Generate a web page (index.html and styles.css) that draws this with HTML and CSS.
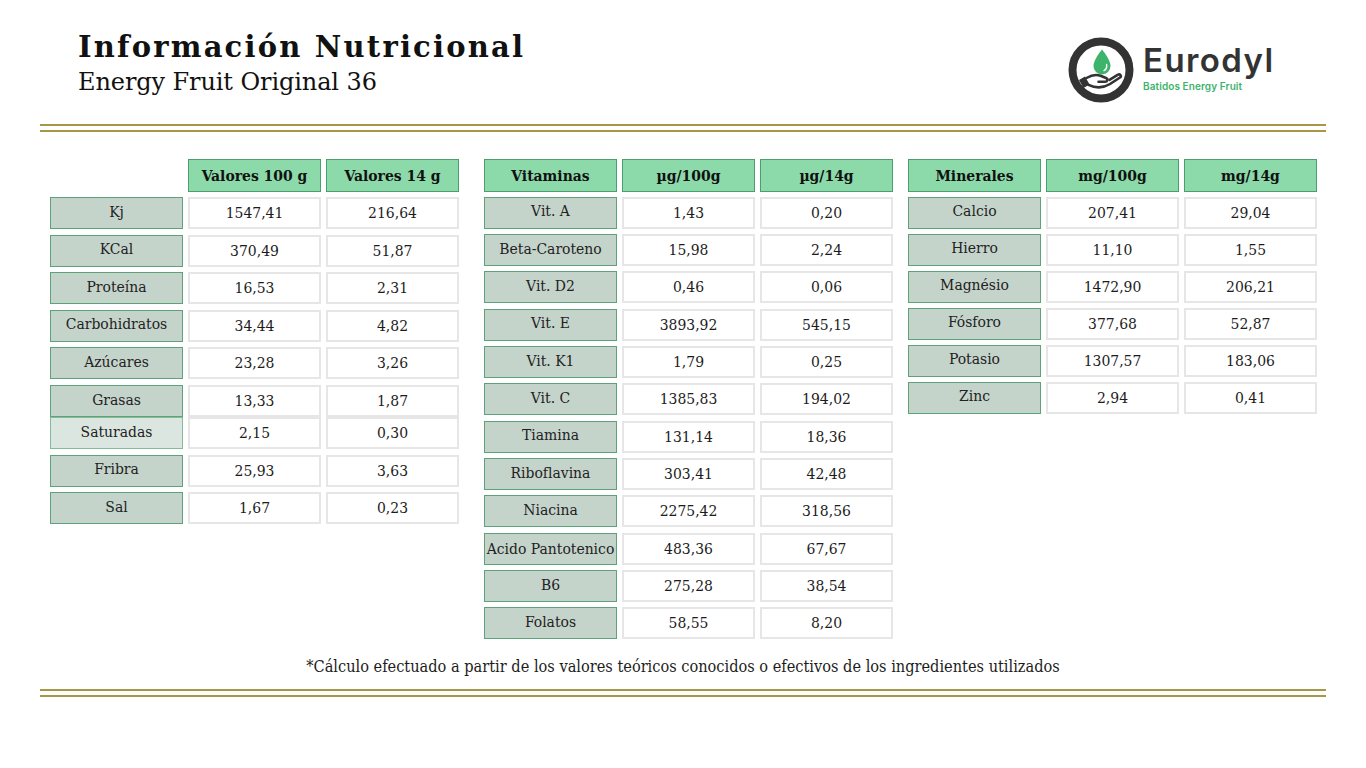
FILE: index.html
```html
<!DOCTYPE html>
<html lang="es">
<head>
<meta charset="utf-8">
<title>Información Nutricional</title>
<link rel="stylesheet" href="styles.css">
</head>
<body>
<div class="page">
  <header class="top">
    <div class="titles">
      <h1 class="title">Información Nutricional</h1>
      <div class="subtitle">Energy Fruit Original 36</div>
    </div>
    <div class="logo">
      <svg class="logo-icon" viewBox="0 0 66 66" width="66" height="66">
        <circle cx="33" cy="33" r="28.5" fill="none" stroke="#333333" stroke-width="8"/>
        <path d="M34 12.5 C34 12.5 25.5 22.5 25.5 29 A8.5 8.5 0 0 0 42.5 29 C42.5 22.5 34 12.5 34 12.5 Z" fill="#3db36c"/>
        <path d="M38.6 27.5 C39 30 38.2 32.4 36 33.6" fill="none" stroke="#ffffff" stroke-width="1.4" stroke-linecap="round"/>
        <path d="M11 43 L17 39.5 L21.5 47.5 L15.5 51 Z" fill="#333333"/>
        <path d="M18.5 41 C23.5 38 28 37 32.5 38.8 L38 41 C40.3 42 39.6 44.8 37 44.8 L30.5 44.8" fill="none" stroke="#333333" stroke-width="2.6" stroke-linecap="round" stroke-linejoin="round"/>
        <path d="M20.5 47.8 C28 51.5 35.5 51 42 47 L52 40.5 C53.8 39 52.2 36.6 50 37.7 L41.5 42.8" fill="none" stroke="#333333" stroke-width="2.6" stroke-linecap="round" stroke-linejoin="round"/>
      </svg>
      <div class="logo-text">
        <div class="brand">Eurodyl</div>
        <div class="tagline">Batidos Energy Fruit</div>
      </div>
    </div>
  </header>

  <div class="rule"></div>

  <main class="tables">
    <section class="tbl tbl-basic">
      <div class="row head-row">
        <div class="cell blank"></div>
        <div class="cell head">Valores 100 g</div>
        <div class="cell head">Valores 14 g</div>
      </div>
      <div class="row"><div class="cell lab">Kj</div><div class="cell val">1547,41</div><div class="cell val">216,64</div></div>
      <div class="row"><div class="cell lab">KCal</div><div class="cell val">370,49</div><div class="cell val">51,87</div></div>
      <div class="row"><div class="cell lab">Proteína</div><div class="cell val">16,53</div><div class="cell val">2,31</div></div>
      <div class="row"><div class="cell lab">Carbohidratos</div><div class="cell val">34,44</div><div class="cell val">4,82</div></div>
      <div class="row"><div class="cell lab">Azúcares</div><div class="cell val">23,28</div><div class="cell val">3,26</div></div>
      <div class="row"><div class="cell lab">Grasas</div><div class="cell val">13,33</div><div class="cell val">1,87</div></div>
      <div class="row joined"><div class="cell lab sub">Saturadas</div><div class="cell val">2,15</div><div class="cell val">0,30</div></div>
      <div class="row"><div class="cell lab">Fribra</div><div class="cell val">25,93</div><div class="cell val">3,63</div></div>
      <div class="row"><div class="cell lab">Sal</div><div class="cell val">1,67</div><div class="cell val">0,23</div></div>
    </section>

    <section class="tbl tbl-vit">
      <div class="row head-row">
        <div class="cell head">Vitaminas</div>
        <div class="cell head">µg/100g</div>
        <div class="cell head">µg/14g</div>
      </div>
      <div class="row"><div class="cell lab">Vit. A</div><div class="cell val">1,43</div><div class="cell val">0,20</div></div>
      <div class="row"><div class="cell lab">Beta-Caroteno</div><div class="cell val">15,98</div><div class="cell val">2,24</div></div>
      <div class="row"><div class="cell lab">Vit. D2</div><div class="cell val">0,46</div><div class="cell val">0,06</div></div>
      <div class="row"><div class="cell lab">Vit. E</div><div class="cell val">3893,92</div><div class="cell val">545,15</div></div>
      <div class="row"><div class="cell lab">Vit. K1</div><div class="cell val">1,79</div><div class="cell val">0,25</div></div>
      <div class="row"><div class="cell lab">Vit. C</div><div class="cell val">1385,83</div><div class="cell val">194,02</div></div>
      <div class="row"><div class="cell lab">Tiamina</div><div class="cell val">131,14</div><div class="cell val">18,36</div></div>
      <div class="row"><div class="cell lab">Riboflavina</div><div class="cell val">303,41</div><div class="cell val">42,48</div></div>
      <div class="row"><div class="cell lab">Niacina</div><div class="cell val">2275,42</div><div class="cell val">318,56</div></div>
      <div class="row"><div class="cell lab tight">Acido Pantotenico</div><div class="cell val">483,36</div><div class="cell val">67,67</div></div>
      <div class="row"><div class="cell lab">B6</div><div class="cell val">275,28</div><div class="cell val">38,54</div></div>
      <div class="row"><div class="cell lab">Folatos</div><div class="cell val">58,55</div><div class="cell val">8,20</div></div>
    </section>

    <section class="tbl tbl-min">
      <div class="row head-row">
        <div class="cell head">Minerales</div>
        <div class="cell head">mg/100g</div>
        <div class="cell head">mg/14g</div>
      </div>
      <div class="row"><div class="cell lab">Calcio</div><div class="cell val">207,41</div><div class="cell val">29,04</div></div>
      <div class="row"><div class="cell lab">Hierro</div><div class="cell val">11,10</div><div class="cell val">1,55</div></div>
      <div class="row"><div class="cell lab">Magnésio</div><div class="cell val">1472,90</div><div class="cell val">206,21</div></div>
      <div class="row"><div class="cell lab">Fósforo</div><div class="cell val">377,68</div><div class="cell val">52,87</div></div>
      <div class="row"><div class="cell lab">Potasio</div><div class="cell val">1307,57</div><div class="cell val">183,06</div></div>
      <div class="row"><div class="cell lab">Zinc</div><div class="cell val">2,94</div><div class="cell val">0,41</div></div>
    </section>
  </main>

  <p class="note">*Cálculo efectuado a partir de los valores teóricos conocidos o efectivos de los ingredientes utilizados</p>

  <div class="rule rule-bottom"></div>
</div>
</body>
</html>
```

FILE: styles.css
```css
html, body {
  margin: 0;
  padding: 0;
  background: #ffffff;
}

body {
  font-family: "DejaVu Serif", "Liberation Serif", serif;
  color: #1c1c1c;
}

.page {
  width: 1366px;
  height: 768px;
  overflow: hidden;
}

/* ---------- header ---------- */
.top {
  display: flex;
  height: 124px;
  box-sizing: border-box;
  padding: 0 92px 0 78px;
}

.titles {
  padding-top: 30px;
}

.title {
  margin: 0;
  font-size: 29px;
  line-height: 34px;
  font-weight: bold;
  letter-spacing: 2.2px;
  color: #111111;
}

.subtitle {
  margin-top: 2.6px;
  font-size: 24px;
  line-height: 30px;
  letter-spacing: -0.1px;
  color: #111111;
}

.logo {
  margin-left: auto;
  width: 206px;
  display: flex;
  align-items: flex-start;
  padding-top: 37px;
}

.logo-icon {
  display: block;
  flex: none;
}

.logo-text {
  margin-left: 9px;
  padding-top: 5px;
  font-family: Inter, "Open Sans", sans-serif;
}

.brand {
  font-size: 33px;
  line-height: 36px;
  font-weight: 600;
  letter-spacing: 1.4px;
  color: #333333;
  white-space: nowrap;
}

.tagline {
  margin-top: 2px;
  font-size: 10px;
  line-height: 12px;
  font-weight: 600;
  letter-spacing: 0.1px;
  color: #3db36c;
  white-space: nowrap;
}

/* ---------- rules ---------- */
.rule {
  margin: 0 40px;
  height: 4px;
  border-top: 2px solid #a79747;
  border-bottom: 2px solid #a79747;
}

.rule-bottom {
  margin-top: 12px;
}

/* ---------- tables ---------- */
.tables {
  display: flex;
  align-items: flex-start;
  margin-top: 26.5px;
  padding-left: 50px;
}

.tbl {
  display: flex;
  flex-direction: column;
}

.tbl-vit { margin-left: 25px; }
.tbl-min { margin-left: 15px; }

.row {
  display: grid;
  grid-template-columns: repeat(3, 133px);
  column-gap: 5px;
  height: 32px;
}

.tbl-basic .row { margin-top: 5.6px; }
.tbl-vit .row { margin-top: 5.33px; }
.tbl-min .row { margin-top: 5px; }

.tbl .head-row {
  margin-top: 0;
  height: 33px;
}

.tbl-basic .row.joined { margin-top: 0; }

.cell {
  box-sizing: border-box;
  display: flex;
  align-items: center;
  justify-content: center;
  white-space: nowrap;
  font-family: "DejaVu Serif Condensed", "DejaVu Serif", serif;
  font-stretch: condensed;
  font-size: 15.5px;
}

.head {
  background: #8cd9aa;
  border: 1.5px solid #4e9d6e;
  font-weight: bold;
  color: #111111;
}

.blank {
  background: transparent;
}

.lab {
  background: #c5d4cb;
  border: 1.5px solid #5ea27a;
  padding-bottom: 3px;
  color: #222222;
}

.lab.sub {
  background: #dce6e0;
  border-color: #86bb9a;
}

.lab.tight {
  padding-bottom: 0;
}

.val {
  background: #ffffff;
  border: 2px solid #e6e6e6;
  color: #1c1c1c;
}

/* ---------- footnote ---------- */
.note {
  margin: 18px 0 0;
  text-align: center;
  font-family: "DejaVu Serif Condensed", "DejaVu Serif", serif;
  font-stretch: condensed;
  font-size: 16.2px;
  line-height: 20px;
  color: #1c1c1c;
}
```
